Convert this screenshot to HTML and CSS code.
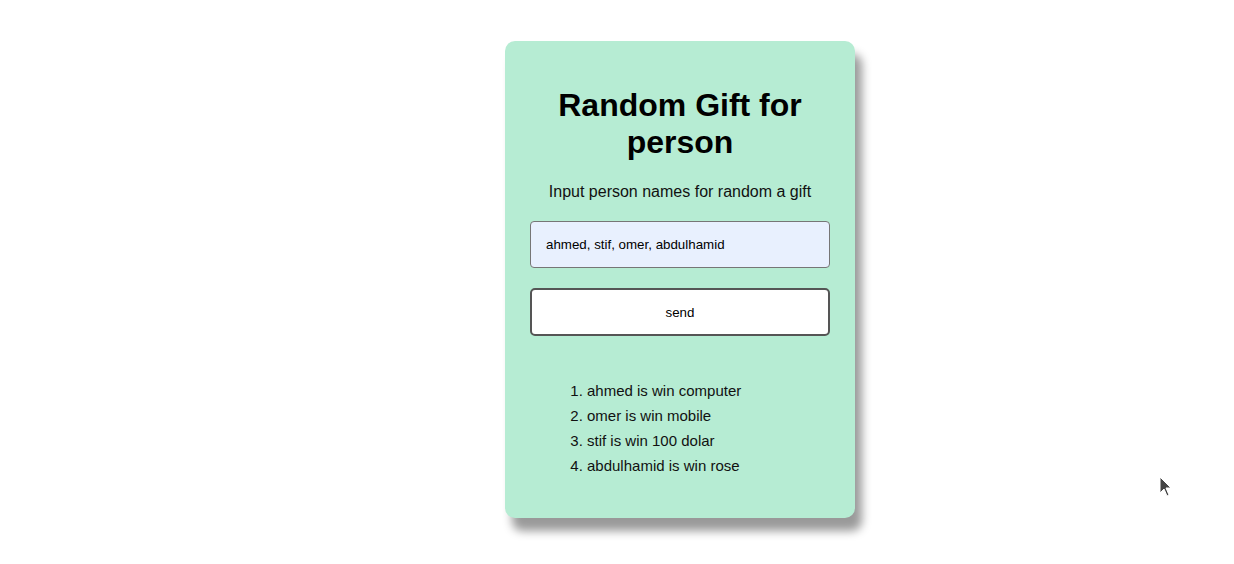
FILE: index.html
```html
<!DOCTYPE html>
<html>
<head>
<meta charset="utf-8">
<link rel="stylesheet" href="styles.css">
</head>
<body>
<main class="page">
  <section class="card">
    <h1 class="title">Random Gift for person</h1>
    <p class="subtitle">Input person names for random a gift</p>
    <input class="names" type="text" value="ahmed, stif, omer, abdulhamid">
    <button class="send">send</button>
    <ol class="results">
      <li>ahmed is win computer</li>
      <li>omer is win mobile</li>
      <li>stif is win 100 dolar</li>
      <li>abdulhamid is win rose</li>
    </ol>
  </section>
</main>
<svg class="cursor" width="14" height="22" viewBox="0 0 14 22">
  <path d="M1 1 L1 17 L5 13 L8 20 L10 19 L7 12 L12 12 Z" fill="#444" stroke="#fff" stroke-width="1"/>
</svg>
</body>
</html>
```
FILE: styles.css
```css
html, body {
  margin: 0;
  padding: 0;
  background: #fff;
  font-family: "Liberation Sans", Arial, sans-serif;
}
.page {
  display: flex;
  align-items: flex-start;
  min-height: 564px;
  box-sizing: border-box;
  padding: 41px 0 0 505px;
}
.card {
  width: 300px;
  padding: 25px;
  background: #b6ecd3;
  border-radius: 10px;
  box-shadow: 7px 13px 10px rgba(0, 0, 0, 0.4);
  display: flex;
  flex-direction: column;
  text-align: center;
}
.title {
  font-size: 32px;
  line-height: 37px;
  font-weight: bold;
  margin: 21px 0 0;
  color: #000;
}
.subtitle {
  font-size: 16px;
  line-height: 18px;
  margin: 22px 0 0;
  color: #111;
}
.names {
  box-sizing: border-box;
  width: 300px;
  height: 47px;
  margin: 20px 0 0;
  padding: 0 15px;
  border: 1px solid #767676;
  border-radius: 4px;
  background: #e8f0fe;
  font-family: "Liberation Sans", Arial, sans-serif;
  font-size: 13.33px;
  color: #000;
  outline: none;
}
.send {
  box-sizing: border-box;
  width: 300px;
  height: 48px;
  margin: 20px 0 0;
  border: 2px solid #555;
  border-radius: 5px;
  background: #fff;
  font-family: "Liberation Sans", Arial, sans-serif;
  font-size: 13.33px;
  color: #000;
}
.results {
  text-align: left;
  margin: 42px 0 15px;
  padding: 0 0 0 57px;
  font-size: 15px;
  line-height: 25px;
  color: #111;
}
.cursor {
  position: absolute;
  left: 1159px;
  top: 476px;
}
```
